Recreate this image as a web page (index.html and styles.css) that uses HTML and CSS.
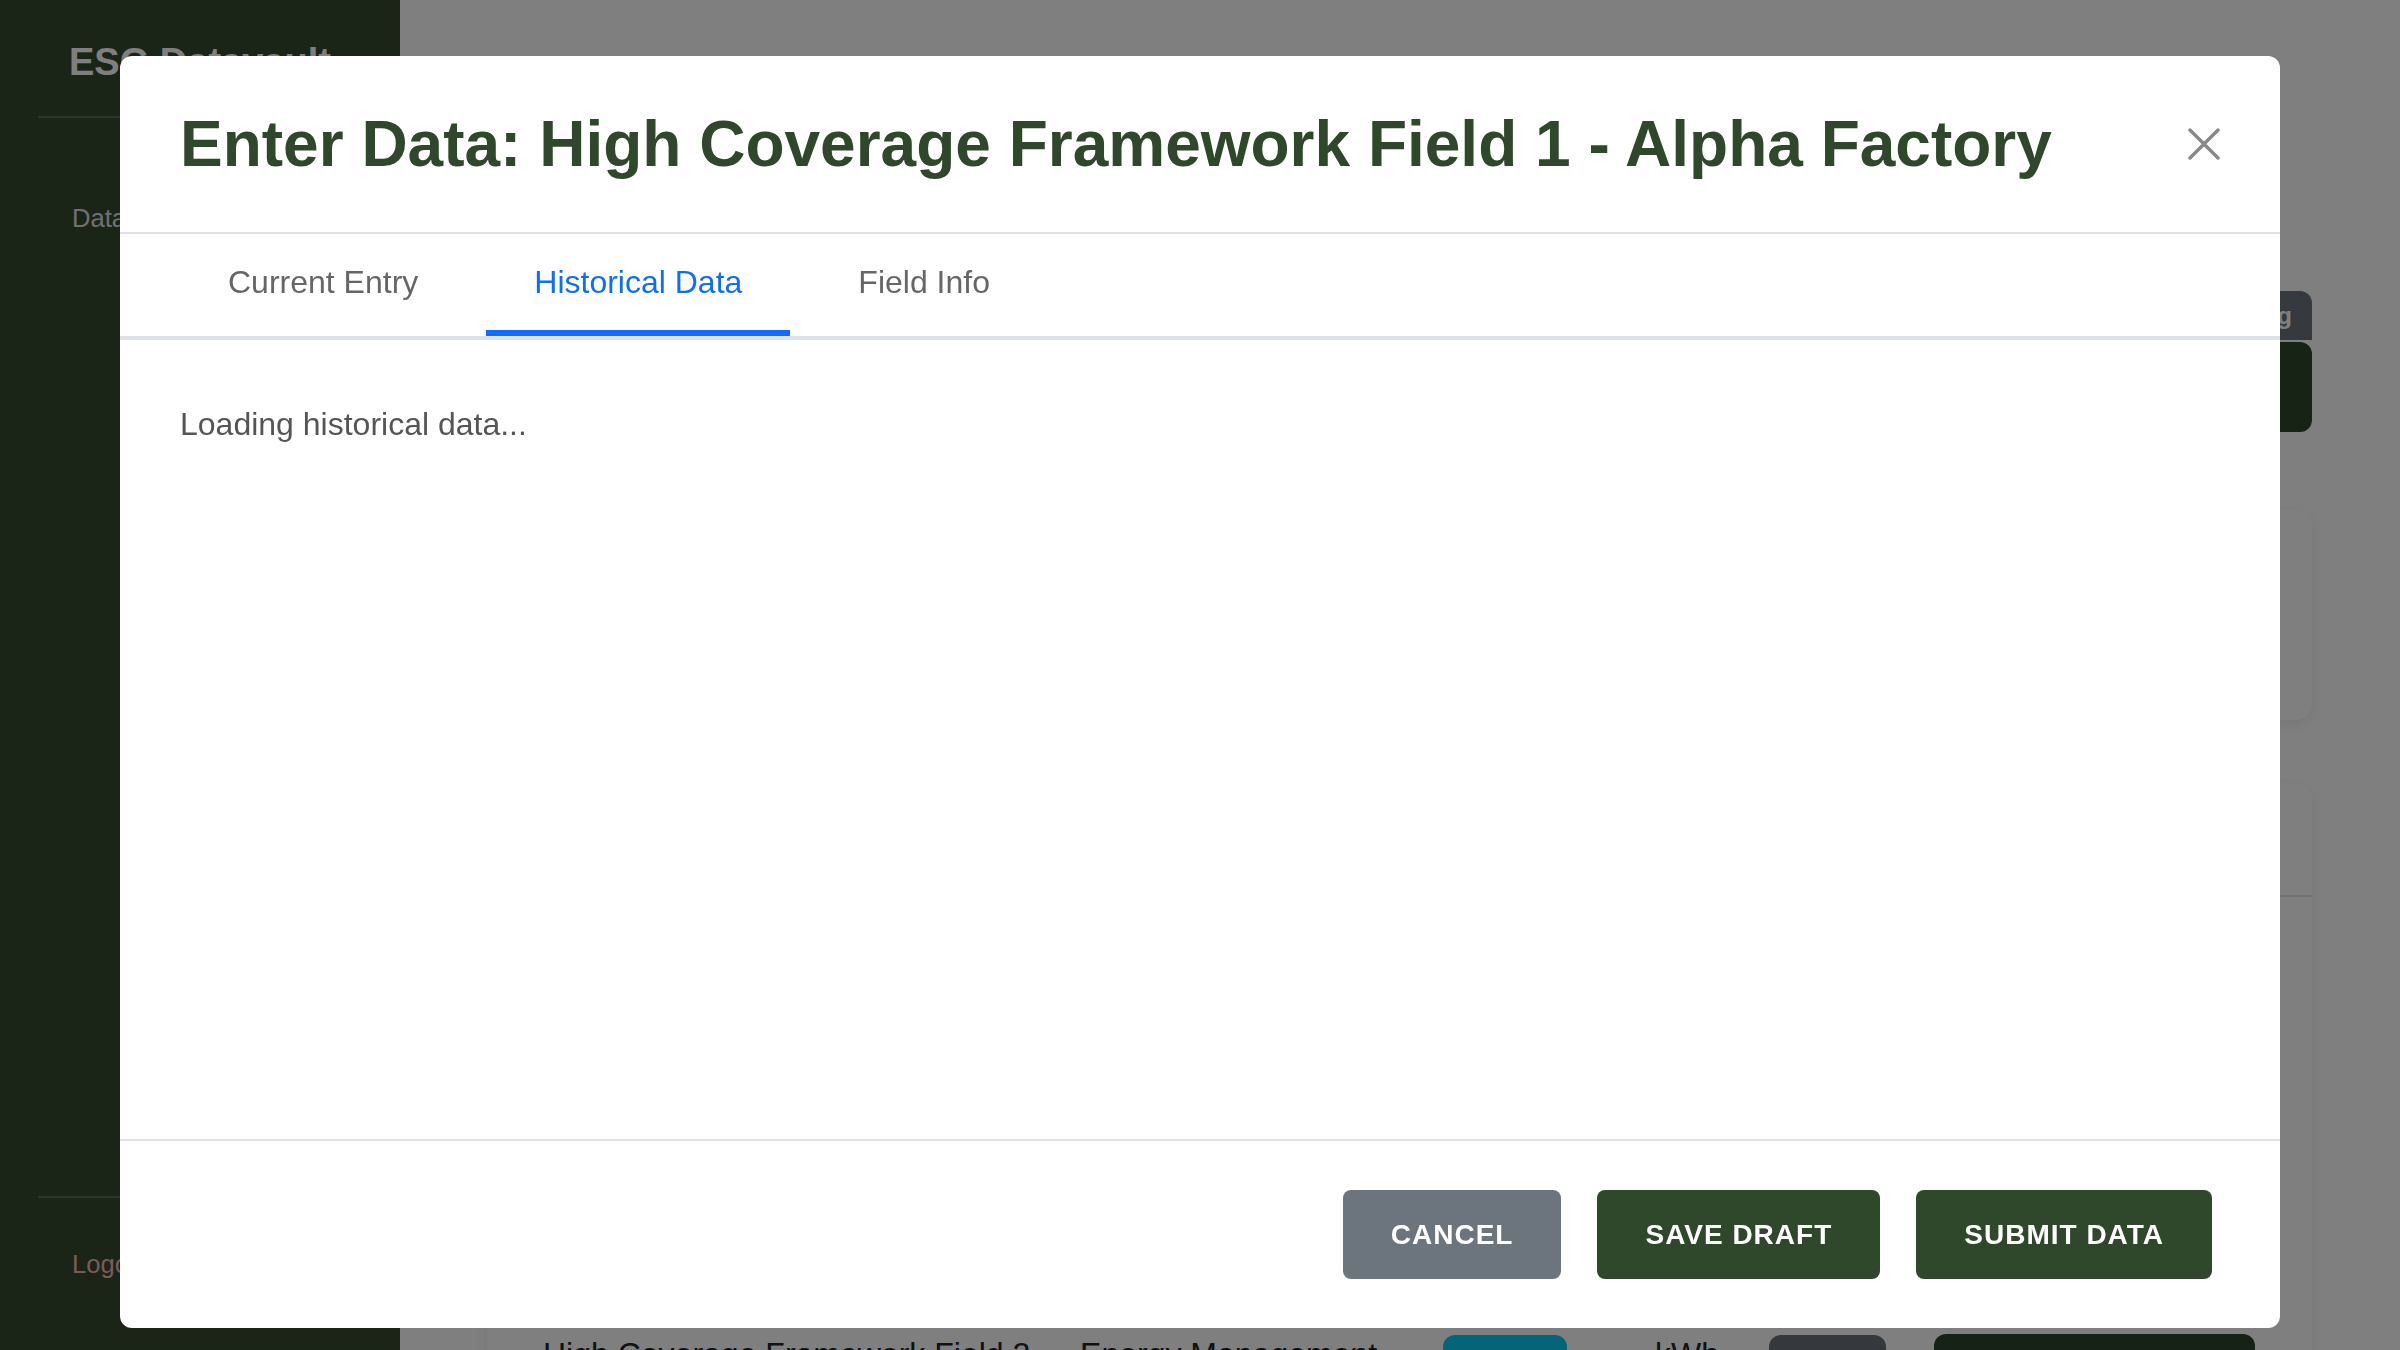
FILE: index.html
```html
<!DOCTYPE html>
<html lang="en">
<head>
<meta charset="utf-8">
<title>ESG Datavault – Enter Data</title>
<link rel="stylesheet" href="styles.css">
</head>
<body>
<div class="app">
  <aside class="sidebar">
    <div class="brand">ESG Datavault</div>
    <nav class="nav">
      <a class="nav-link">Data Entry</a>
    </nav>
    <div class="sidebar-spacer"></div>
    <div class="sidebar-bottom">
      <a class="logout">Logout</a>
    </div>
  </aside>

  <main class="main">
    <div class="toolbar">
      <span class="status-badge">Auto-saving</span>
      <button class="primary-action">Export Report</button>
    </div>

    <section class="card card-filters"></section>

    <section class="card card-fields">
      <div class="card-header">Assigned Fields</div>
      <div class="card-body">
        <div class="field-row">
          <span class="field-name">High Coverage Framework Field 2 — Energy Management</span>
          <span class="pill pill-info">Raw</span>
          <span class="field-unit">kWh</span>
          <span class="pill pill-muted">Draft</span>
          <button class="row-action">Enter Data</button>
        </div>
      </div>
    </section>
  </main>
</div>

<div class="overlay">
  <div class="modal">
    <header class="modal-header">
      <h1 class="modal-title">Enter Data: High Coverage Framework Field 1 - Alpha Factory</h1>
      <button class="close-btn" aria-label="Close">
        <svg width="32" height="32" viewBox="0 0 32 32">
          <path d="M2 2 L30 30 M30 2 L2 30" stroke="#898989" stroke-width="3.5" stroke-linecap="round" fill="none"/>
        </svg>
      </button>
    </header>
    <div class="tabs">
      <button class="tab">Current Entry</button>
      <button class="tab active">Historical Data</button>
      <button class="tab">Field Info</button>
    </div>
    <div class="modal-body">
      <p class="loading">Loading historical data...</p>
    </div>
    <footer class="modal-footer">
      <button class="btn btn-cancel">CANCEL</button>
      <button class="btn btn-green">SAVE DRAFT</button>
      <button class="btn btn-green">SUBMIT DATA</button>
    </footer>
  </div>
</div>
</body>
</html>
```

FILE: styles.css
```css
* { box-sizing: border-box; }

html, body {
  margin: 0;
  padding: 0;
  width: 2400px;
  height: 1350px;
  overflow: hidden;
  font-family: "Liberation Sans", Arial, Helvetica, sans-serif;
}

.app {
  display: flex;
  width: 2400px;
  height: 1350px;
  background: #ffffff;
}

/* ---------- Sidebar ---------- */
.sidebar {
  width: 400px;
  flex: 0 0 400px;
  background: #35482f;
  display: flex;
  flex-direction: column;
  padding: 0 38px;
}

.brand {
  padding: 39px 0 31px 31px;
  line-height: 46px;
  font-size: 38px;
  font-weight: 700;
  color: #ffffff;
  border-bottom: 2px solid #5a6b55;
}

.nav {
  padding: 81px 0 0 34px;
}

.nav-link {
  display: block;
  font-size: 25.6px;
  line-height: 38px;
  color: #e0e0e0;
}

.sidebar-spacer { flex: 1; }

.sidebar-bottom {
  border-top: 2px solid #5a6b55;
  padding: 47px 0 67px 34px;
}

.logout {
  display: block;
  font-size: 25.6px;
  line-height: 38px;
  color: #f5b4b6;
}

/* ---------- Main ---------- */
.main {
  flex: 1;
  padding: 291px 88px 0 87px;
  display: flex;
  flex-direction: column;
}

.toolbar {
  display: flex;
  flex-direction: column;
  align-items: flex-end;
  gap: 2px;
  flex: none;
}

.status-badge {
  height: 49px;
  line-height: 49px;
  padding: 0 20px;
  background: #6c757d;
  color: #ffffff;
  font-size: 24px;
  font-weight: 700;
  border-radius: 12px 12px 0 0;
}

.primary-action {
  height: 90px;
  width: 360px;
  border: none;
  border-radius: 12px;
  background: #2f472a;
  color: #ffffff;
  font-family: inherit;
  font-size: 28px;
  font-weight: 700;
}

.card {
  background: #ffffff;
  border-radius: 16px;
  box-shadow: 0 4px 14px rgba(0, 0, 0, 0.08);
  flex: none;
}

.card-filters {
  margin-top: 78px;
  height: 210px;
}

.card-fields {
  margin-top: 63px;
  height: 700px;
}

.card-header {
  height: 114px;
  border-bottom: 2px solid #dee2e6;
  padding: 0 56px;
  line-height: 112px;
  font-size: 32px;
  font-weight: 700;
  color: #212529;
}

.card-body {
  padding: 433px 57px 0 56px;
}

.field-row {
  display: flex;
  align-items: flex-start;
  height: 120px;
}

.field-name {
  width: 900px;
  flex: none;
  font-size: 32px;
  line-height: 48px;
  color: #212529;
  white-space: nowrap;
}

.pill {
  flex: none;
  margin-top: 5px;
  height: 60px;
  border-radius: 12px;
  color: #ffffff;
  font-size: 26px;
  font-weight: 700;
  line-height: 60px;
  text-align: center;
}

.pill-info { width: 124px; background: #0dc8f0; }

.field-unit {
  flex: none;
  width: 202px;
  padding-left: 88px;
  font-size: 32px;
  line-height: 48px;
  color: #212529;
}

.pill-muted { width: 117px; background: #6a717a; }

.row-action {
  flex: none;
  margin-left: 48px;
  margin-top: 4px;
  width: 321px;
  height: 70px;
  border: none;
  border-radius: 12px;
  background: #2e442c;
  color: #ffffff;
  font-family: inherit;
  font-size: 26px;
  font-weight: 700;
}

/* ---------- Overlay & Modal ---------- */
.overlay {
  position: fixed;
  inset: 0;
  background: rgba(0, 0, 0, 0.5);
  display: flex;
  justify-content: center;
  align-items: flex-start;
}

.modal {
  margin-top: 56px;
  width: 2160px;
  height: 1272px;
  background: #ffffff;
  border-radius: 12px;
  overflow: hidden;
  display: flex;
  flex-direction: column;
}

.modal-header {
  display: flex;
  align-items: center;
  justify-content: space-between;
  padding: 48px 60px;
  border-bottom: 2px solid #dee2e6;
}

.modal-title {
  margin: 0;
  font-size: 64px;
  line-height: 80px;
  font-weight: 700;
  color: #2f472a;
  white-space: nowrap;
}

.close-btn {
  border: none;
  background: none;
  padding: 0;
  width: 32px;
  height: 32px;
  display: flex;
}

.tabs {
  display: flex;
  gap: 20px;
  padding: 0 60px;
  border-bottom: 4px solid #dee2e6;
}

.tab {
  border: none;
  border-bottom: 6px solid transparent;
  background: none;
  padding: 24px 48px;
  font-family: inherit;
  font-size: 32px;
  line-height: 48px;
  color: #666666;
}

.tab.active {
  color: #0d6efd;
  border-bottom-color: #0d6efd;
}

.modal-body {
  flex: 1;
  padding: 60px;
}

.loading {
  margin: 0;
  font-size: 32px;
  line-height: 48px;
  color: #555555;
}

.modal-footer {
  display: flex;
  justify-content: flex-end;
  gap: 36px;
  padding: 49px 68px 49px 60px;
  border-top: 2px solid #dee2e6;
}

.btn {
  height: 89px;
  padding: 0 48px;
  border: none;
  border-radius: 8px;
  color: #ffffff;
  font-family: inherit;
  font-size: 28px;
  font-weight: 700;
  letter-spacing: 1px;
}

.btn-cancel { background: #6c757d; }
.btn-green { background: #2f472a; }
```
